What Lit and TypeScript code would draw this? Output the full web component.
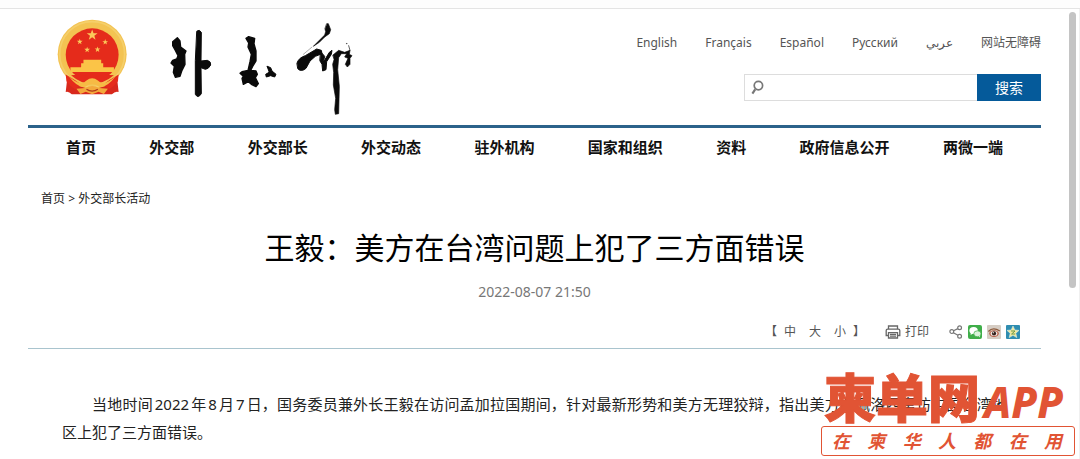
import { LitElement, html, css, svg } from "lit";
import { customElement, property } from "lit/decorators.js";

const LANGUAGES = [
  { label: "English", lang: "en" },
  { label: "Français", lang: "fr" },
  { label: "Español", lang: "es" },
  { label: "Русский", lang: "ru" },
  { label: "عربي", lang: "ar" },
  { label: "网站无障碍", lang: "zh" },
];

const SECTIONS = [
  "首页",
  "外交部",
  "外交部长",
  "外交动态",
  "驻外机构",
  "国家和组织",
  "资料",
  "政府信息公开",
  "两微一端",
];

const star = (cx: number, cy: number, r: number) => {
  const points = Array.from({ length: 10 }, (_, i) => {
    const radius = i % 2 ? r * 0.4 : r;
    const a = (Math.PI / 5) * i - Math.PI / 2;
    return `${(cx + radius * Math.cos(a)).toFixed(1)},${(cy + radius * Math.sin(a)).toFixed(1)}`;
  }).join(" ");
  return svg`<polygon points=${points} fill="#fbc95a"/>`;
};

@customElement("site-brand")
class SiteBrand extends LitElement {
  static styles = css`
    :host {
      display: flex;
      align-items: flex-start;
      gap: 42px;
    }
    svg {
      display: block;
    }
    .emblem {
      margin-top: 10px;
    }
    .script {
      margin-top: 12px;
    }
  `;

  render() {
    return html`
      <svg class="emblem" width="71" height="76" viewBox="50 26 212 227" role="img" aria-label="国徽">
        <path d="M82 190 L76 244 Q84 240 94 251 H214 Q224 240 234 244 L228 190Z" fill="#d8281c" />
        <circle cx="155" cy="131" r="103" fill="#f3c352" />
        <circle cx="155" cy="131" r="97" fill="none" stroke="#f5cf6a" stroke-width="5" />
        <circle cx="155" cy="133" r="79" fill="#e52b1b" />
        ${star(155, 74, 17)} ${star(118, 94, 9)} ${star(194, 95, 9)} ${star(140, 118, 9)} ${star(171, 117, 9)}
        <path d="M129 148H182V158H188V170H220V184H90V170H122V158H129Z" fill="#fbc447" />
        <path d="M92 194 Q126 188 155 204 Q184 188 220 194 Q190 219 155 220 Q120 219 92 194Z" fill="#e52b1b" />
        <path d="M76 192 Q104 208 122 222 L104 236 Q88 226 78 212Z M234 192 Q206 208 188 222 L206 236 Q222 226 232 212Z" fill="#e52b1b" />
        <path d="M84 196 Q122 230 138 210 Q155 196 172 210 Q188 230 226 196 Q196 234 176 228 Q155 212 134 228 Q114 234 84 196Z" fill="#f6bb45" />
        <path d="M108 234 L134 232 Q155 220 176 232 L202 234 L190 250 L174 243 L155 251 L136 243 L120 250Z" fill="#f3a93c" />
        <path d="M138 236 Q155 247 172 236" fill="none" stroke="#b23a1a" stroke-width="4" />
      </svg>
      <svg class="script" width="184" height="95" viewBox="60 30 552 285" role="img" aria-label="外交部">
        <g fill="#0a0a0a" stroke="#0a0a0a" stroke-linejoin="round" stroke-linecap="round">
          <path stroke-width="4" d="M68 92 L82 80 L90 90 L92 108 L108 120 L104 130 L105 160 L96 178 L90 196 L76 199 L70 184 L73 166 L63 156 L68 148 L80 144 L84 134 L76 118 L68 104Z" />
          <path stroke-width="3" d="M141 60 Q148 54 154 64 L153 150 L172 148 Q184 152 182 162 Q176 174 166 175 L153 170 L154 248 Q144 264 136 250 L136 150Z" />
          <path stroke-width="4" d="M288 82 L296 77 L314 82 L312 98 L318 120 L318 150 L308 166 L302 178 L318 180 L322 190 L316 200 L325 218 L318 227 L304 220 L295 212 L280 220 L276 202 L280 196 L270 187 L276 182 L294 178 L300 152 L304 130 L294 108 L296 96Z" />
          <path stroke-width="3" d="M352 166 L362 170 L366 180 L378 190 L374 198 L362 194 L349 198 L347 190 L357 184Z" />
          <path stroke-width="2" d="M531 38 L535 38 L542 56 L538 68 L524 78 L508 94 L490 106 L506 90 L524 72 L527 62 L525 54Z" />
          <path stroke-width="1" fill="none" d="M485 109 L460 130" />
          <path stroke-width="3" d="M441 156 Q446 140 466 134 L500 114 L514 118 L516 128 L496 136 L480 150 L468 172 Q454 184 444 174Z" />
          <path stroke-width="3" d="M512 122 L524 136 L520 154 L538 124 L546 118 L544 130 L530 152 L528 176 L518 180 L516 160 L510 150Z" />
          <path stroke-width="2" d="M549 132 L566 118 L584 124 L600 118 L598 130 L606 134 L600 142 L600 160 L592 168 L586 160 L594 142 L584 138 L590 128 L574 128 L566 140 L563 176 L568 226 L566 308 L556 310 L554 296 L557 262 L550 222 L551 184 L548 160 L552 146Z" />
          <path stroke-width="2" d="M596 104 L600 118" fill="none" />
          <circle cx="590" cy="98" r="1" />
        </g>
      </svg>
    `;
  }
}

@customElement("article-tools")
class ArticleTools extends LitElement {
  static styles = css`
    :host {
      display: flex;
      justify-content: flex-end;
      align-items: center;
      gap: 20px;
      height: 32px;
      padding-right: 21px;
      border-bottom: 1px solid #a9c4ce;
      color: #555;
    }
    .sizes,
    .share {
      display: flex;
      align-items: center;
    }
    .sizes {
      gap: 13px;
    }
    .share {
      gap: 5px;
    }
    button {
      display: flex;
      align-items: center;
      gap: 4px;
      padding: 0;
      border: 0;
      background: none;
      font: inherit;
      color: inherit;
      cursor: pointer;
    }
    .open {
      margin-right: -6px;
    }
    .close {
      margin-left: -6px;
    }
    svg {
      display: block;
    }
  `;

  render() {
    return html`
      <div class="sizes">
        <span class="open">【</span>
        <button>中</button>
        <button>大</button>
        <button>小</button>
        <span class="close">】</span>
      </div>
      <button>
        <svg width="16" height="14" viewBox="0 0 16 14" fill="none" stroke="#666" stroke-width="1.3">
          <path d="M3.5 4V1H12.5V4M3.5 10.5H1.2V5.6Q1.2 4.2 2.6 4.2H13.4Q14.8 4.2 14.8 5.6V10.5H12.5M3.5 7.6H12.5V13H3.5Z" />
          <path d="M5 9.4H11M5 11.2H11" />
        </svg>
        打印
      </button>
      <div class="share">
        <button aria-label="分享">
          <svg width="14" height="14" viewBox="0 0 14 14" fill="none" stroke="#777" stroke-width="1.2">
            <circle cx="2.8" cy="6.6" r="1.9" />
            <circle cx="10.6" cy="2.8" r="1.9" />
            <circle cx="10.6" cy="11.2" r="1.9" />
            <path d="M4.6 5.8L8.8 3.6M4.4 7.7L9 10.3" />
          </svg>
        </button>
        <button aria-label="微信">
          <svg width="14" height="14" viewBox="0 0 14 14">
            <rect width="14" height="14" rx="2" fill="#3fae49" />
            <ellipse cx="5.6" cy="5.4" rx="4.2" ry="3.5" fill="#fff" />
            <path d="M3 7.6L2.6 10L5 8.6Z" fill="#fff" />
            <ellipse cx="9.4" cy="8.8" rx="3.6" ry="3" fill="#d9f2d9" stroke="#3fae49" stroke-width=".7" />
            <path d="M10.6 11L12 12.6L12 10.4Z" fill="#d9f2d9" />
          </svg>
        </button>
        <button aria-label="微博">
          <svg width="14" height="14" viewBox="0 0 14 14">
            <rect width="14" height="14" rx="1" fill="#d6cdc4" />
            <path d="M1.4 6.4Q6 1.6 12.8 6" fill="none" stroke="#8d5a3c" stroke-width="1.4" />
            <ellipse cx="7" cy="8.6" rx="4.8" ry="3.4" fill="#b9604a" />
            <ellipse cx="7" cy="8.6" rx="3.4" ry="2.5" fill="#f4ece6" />
            <circle cx="7" cy="8.4" r="2.1" fill="#33201c" />
            <circle cx="6.3" cy="7.7" r=".6" fill="#fff" />
          </svg>
        </button>
        <button aria-label="收藏">
          <svg width="14" height="14" viewBox="0 0 14 14">
            <rect width="14" height="14" rx="1" fill="#2f8db0" />
            <path d="M7 1L8.8 5L13 5.4L9.8 8.2L10.8 12.6L7 10.3L3.2 12.6L4.2 8.2L1 5.4L5.2 5Z" fill="#f4e89a" stroke="#d8f0e8" stroke-width=".6" />
            <path d="M5 6H9L5.6 9H9.2" fill="none" stroke="#6c9a4a" stroke-width="1" />
          </svg>
        </button>
      </div>
    `;
  }
}

@customElement("app-badge")
class AppBadge extends LitElement {
  static styles = css`
    :host {
      display: block;
      width: 254px;
      color: #e15434;
    }
    .name {
      display: flex;
      align-items: baseline;
      padding-left: 3px;
      line-height: 48px;
      font-size: 52px;
      font-weight: 900;
      -webkit-text-stroke: 1px #e15434;
    }
    .latin {
      margin-left: 4px;
      font-family: "Noto Sans", sans-serif;
      font-size: 42px;
      font-weight: 800;
      font-style: italic;
      -webkit-text-stroke: 0;
    }
    .slogan {
      box-sizing: border-box;
      height: 30px;
      padding: 0 12px 0 10px;
      border: 1px solid #e15434;
      border-radius: 3px;
      background: #fff;
      font-size: 18px;
      font-weight: 700;
      font-style: italic;
      line-height: 28px;
      display: flex;
      justify-content: space-between;
    }
  `;

  @property() slogan = "在柬华人都在用";

  render() {
    return html`
      <div class="name">柬单网<span class="latin">APP</span></div>
      <div class="slogan">${[...this.slogan].map((c) => html`<span>${c}</span>`)}</div>
    `;
  }
}

@customElement("app-root")
class AppRoot extends LitElement {
  static styles = css`
    :host {
      display: block;
      position: relative;
      min-height: 100vh;
      overflow: hidden;
      background: #fff;
      color: #111;
      font-family: "Noto Sans", "Noto Sans CJK SC", sans-serif;
      font-size: 12px;
      line-height: 18px;
    }
    a {
      color: inherit;
      text-decoration: none;
    }
    .chrome {
      height: 8px;
      border-bottom: 1px solid #e4e4e4;
      background: #fdfdfd;
    }
    .view {
      display: flex;
      min-height: calc(100vh - 9px);
    }
    .page {
      flex: 1;
      padding: 0 28px;
    }
    .track {
      width: 10px;
      padding-top: 3px;
      border-right: 1px solid #f0f0f0;
    }
    .thumb {
      width: 7px;
      height: 276px;
      border-radius: 4px;
      background: #c4c4c4;
    }
    .top {
      display: flex;
      justify-content: space-between;
      height: 116px;
      padding-left: 29px;
      border-bottom: 3px solid #2b628a;
    }
    .aside {
      display: flex;
      flex-direction: column;
      align-items: flex-end;
      gap: 22px;
      padding-top: 25px;
    }
    .langs {
      display: flex;
      gap: 28px;
      color: #555;
    }
    .search {
      display: flex;
      height: 27px;
    }
    .field {
      display: flex;
      align-items: center;
      box-sizing: border-box;
      width: 233px;
      padding-left: 6px;
      border: 1px solid #ddd;
      border-right: 0;
    }
    .field input {
      flex: 1;
      min-width: 0;
      border: 0;
      outline: 0;
      background: none;
      font: inherit;
    }
    .go {
      width: 64px;
      padding: 0;
      border: 0;
      background: #055a9a;
      color: #fff;
      font: inherit;
      font-size: 14px;
    }
    .nav {
      display: flex;
      justify-content: space-between;
      padding: 8px 38px 10px;
      font-size: 15px;
      font-weight: 700;
      line-height: 22px;
    }
    .crumbs {
      padding: 22px 13px 0;
      color: #222;
    }
    h1 {
      margin: 18px 0 0;
      font-size: 30px;
      font-weight: 400;
      line-height: 44px;
      text-align: center;
      color: #000;
    }
    .date {
      margin: 12px 0 14px;
      font-size: 14px;
      line-height: 20px;
      text-align: center;
      color: #777;
    }
    .body {
      margin: 41px 34px 0;
      font-size: 15px;
      line-height: 28px;
      text-indent: 2em;
      text-align: justify;
      text-autospace: normal;
      color: #222;
    }
    .badge {
      position: absolute;
      right: 5px;
      bottom: 3px;
    }
  `;

  render() {
    return html`
      <div class="chrome"></div>
      <div class="view">
        <main class="page">
          <header class="top">
            <site-brand></site-brand>
            <div class="aside">
              <div class="langs">
                ${LANGUAGES.map((l) => html`<a href="#" lang=${l.lang}>${l.label}</a>`)}
              </div>
              <form class="search" @submit=${(e: Event) => e.preventDefault()}>
                <label class="field">
                  <svg width="13" height="16" viewBox="0 0 13 16" fill="none" stroke="#777">
                    <circle cx="7.4" cy="5.6" r="4.2" stroke-width="1.7" />
                    <path d="M4.2 9.4L1.4 13.6" stroke-width="2.2" />
                  </svg>
                  <input type="text" aria-label="搜索" />
                </label>
                <button class="go">搜索</button>
              </form>
            </div>
          </header>
          <nav class="nav">${SECTIONS.map((s) => html`<a href="#">${s}</a>`)}</nav>
          <div class="crumbs"><a href="#">首页</a> &gt; <a href="#">外交部长活动</a></div>
          <article>
            <h1>王毅：美方在台湾问题上犯了三方面错误</h1>
            <p class="date">2022-08-07 21:50</p>
            <article-tools></article-tools>
            <p class="body">当地时间2022年8月7日，国务委员兼外长王毅在访问孟加拉国期间，针对最新形势和美方无理狡辩，指出美方在佩洛西窜访中国台湾地区上犯了三方面错误。</p>
          </article>
        </main>
        <div class="track"><div class="thumb"></div></div>
      </div>
      <app-badge class="badge"></app-badge>
    `;
  }
}
